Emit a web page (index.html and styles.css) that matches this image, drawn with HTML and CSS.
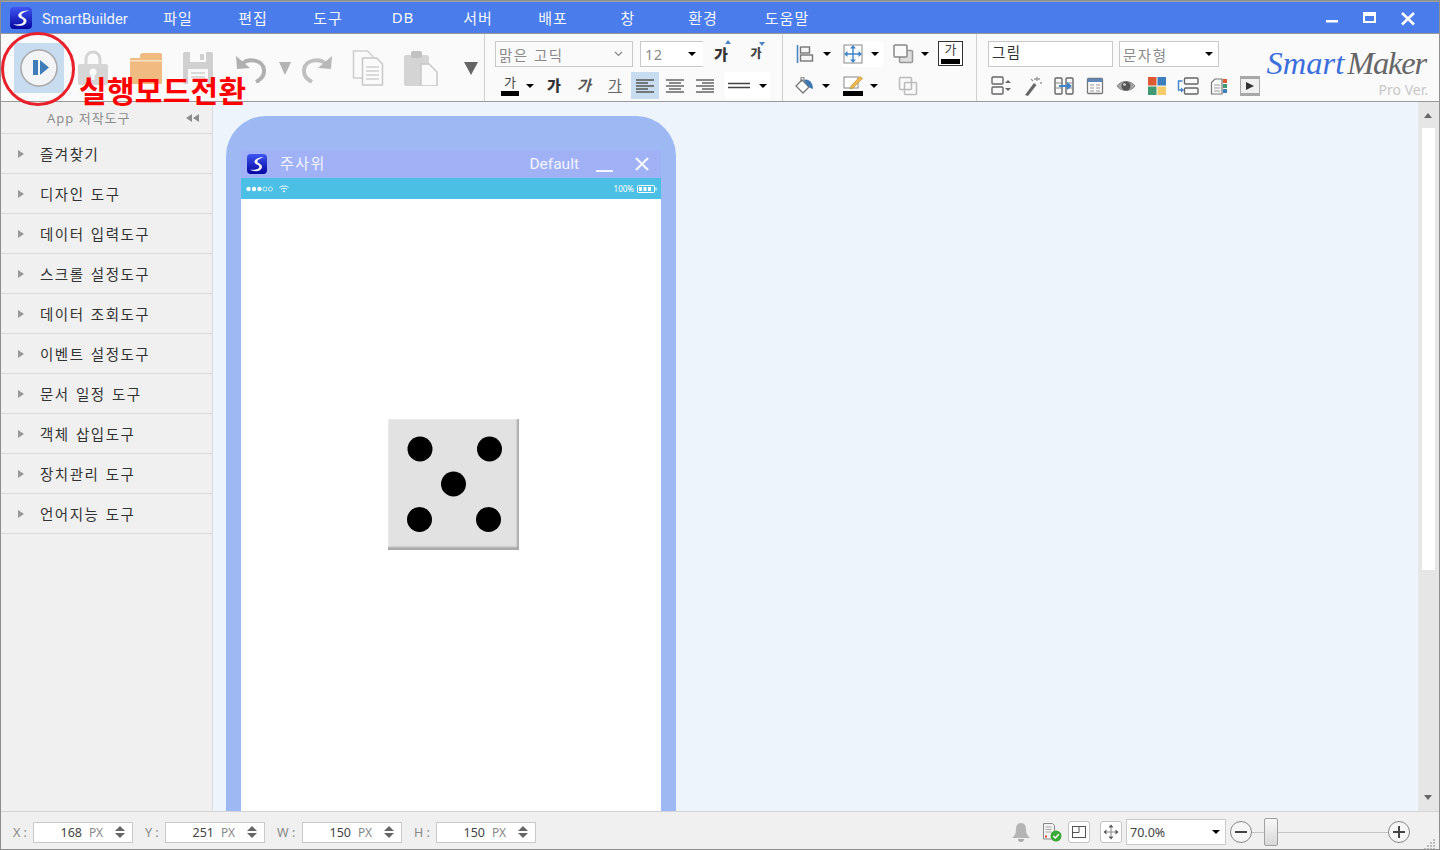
FILE: index.html
```html
<!DOCTYPE html>
<html lang="ko">
<head>
  <meta charset="UTF-8">
  <title>SmartBuilder</title>
  <link rel="stylesheet" href="styles.css">
</head>
<body>
  <svg class="defs" width="0" height="0">
    <defs>
      <linearGradient id="app-blue" x1="0" y1="0" x2="0" y2="1">
        <stop offset="0" stop-color="#3f55f2"/>
        <stop offset="1" stop-color="#0505a0"/>
      </linearGradient>
      <symbol id="app-logo" viewBox="0 0 22 22">
        <rect width="22" height="22" rx="4" fill="url(#app-blue)"/>
        <path d="M19 3.500C13 3 7 6 8.500 9.500C10 12 14 11.500 13.500 14.500C13 17 7.500 18 3 17C8 20 15.500 19.500 16.500 14.500C17 11 12 10.500 11.500 8.500C11 6.500 15 4.500 19 3.500Z" fill="#f4f6ff"/>
      </symbol>
    </defs>
  </svg>

  <div class="app">
    <!-- 타이틀바 -->
    <header class="titlebar">
      <div class="brand">
        <svg class="brand-icon"><use href="#app-logo"/></svg>
        <span>SmartBuilder</span>
      </div>
      <nav class="menu">
        <a>파일</a><a>편집</a><a>도구</a><a>DB</a><a>서버</a><a>배포</a><a>창</a><a>환경</a><a class="menu-last">도움말</a>
      </nav>
      <div class="win-btns">
        <svg width="38" height="24" viewBox="0 0 38 24"><rect x="13" y="14" width="12" height="2.500" fill="#fff"/></svg>
        <svg width="38" height="24" viewBox="0 0 38 24"><rect x="13" y="7" width="11" height="9" fill="none" stroke="#fff" stroke-width="2"/><rect x="13" y="7" width="11" height="3" fill="#fff"/></svg>
        <svg width="38" height="24" viewBox="0 0 38 24"><path d="M13 7L25 18.500M25 7L13 18.500" stroke="#fff" stroke-width="2.600"/></svg>
      </div>
    </header>

    <!-- 툴바 -->
    <section class="toolbar">
      <div class="group group-main">
        <button class="cell"><span class="run-btn">
          <svg width="50" height="50" viewBox="0 0 50 50"><circle cx="25" cy="25" r="18" fill="#f2f4f6" stroke="#a9a9a9" stroke-width="1.500"/><rect x="19" y="17" width="5" height="15" fill="#3f7db8"/><path d="M26 17L35 24.500L26 32Z" fill="#3f7db8"/></svg>
        </span></button>
        <button class="cell"><svg width="30" height="36" viewBox="0 0 30 36"><path d="M8 16V9a7 7 0 0 1 14 0v7" fill="none" stroke="#d4d4d4" stroke-width="3"/><rect x="0" y="14" width="30" height="21" rx="2" fill="#d6d6d6"/><circle cx="15" cy="22" r="3.500" fill="#fafafa"/><rect x="13.500" y="23" width="3" height="7" fill="#fafafa"/></svg></button>
        <button class="cell"><svg width="34" height="32" viewBox="0 0 34 32"><path d="M11 4a3 3 0 0 1 3-3h17a2 2 0 0 1 2 2v5H11Z" fill="#efbb80"/><rect x="1" y="6" width="32" height="26" rx="1" fill="#efbb80"/><rect x="1" y="8" width="32" height="1.500" fill="#f9e2c6"/></svg></button>
        <button class="cell"><svg width="30" height="32" viewBox="0 0 30 32"><path d="M0 2a2 2 0 0 1 2-2h26a2 2 0 0 1 2 2v28a2 2 0 0 1-2 2H2a2 2 0 0 1-2-2Z" fill="#d0d0d0"/><rect x="7" y="0" width="16" height="10" fill="#fafafa"/><rect x="17" y="2" width="4" height="6" fill="#d0d0d0"/><rect x="5" y="17" width="20" height="15" fill="#fafafa"/><path d="M8 21h14M8 25h14" stroke="#d0d0d0" stroke-width="1.500"/></svg></button>
        <button class="cell"><svg width="32" height="30" viewBox="0 0 32 30"><path d="M7 11C13 5 28 6 29 17C29.500 23 25 27 21 29" fill="none" stroke="#b0b0b0" stroke-width="4"/><path d="M1 3L2 16L15 15Z" fill="#b0b0b0"/></svg></button>
        <button class="cell"><i class="tri-lg"></i></button>
        <button class="cell"><svg width="32" height="30" viewBox="0 0 32 30"><g transform="translate(32 0) scale(-1 1)"><path d="M7 11C13 5 28 6 29 17C29.500 23 25 27 21 29" fill="none" stroke="#c0c0c0" stroke-width="4"/><path d="M1 3L2 16L15 15Z" fill="#b8b8b8"/></g></svg></button>
        <button class="cell"><svg width="32" height="36" viewBox="0 0 32 36"><path d="M1.500 1h14l5 5v22h-19Z" fill="#fafafa" stroke="#cfcfcf" stroke-width="1.500"/><path d="M10.500 8h14l6 6v21h-20Z" fill="#fafafa" stroke="#c8c8c8" stroke-width="1.500"/><path d="M14 17h13M14 21h13M14 25h13M14 29h13" stroke="#cfcfcf" stroke-width="1.500"/></svg></button>
        <button class="cell"><svg width="36" height="36" viewBox="0 0 36 36"><path d="M2 7a2 2 0 0 1 2-2h21a2 2 0 0 1 2 2v27a2 2 0 0 1-2 2H4a2 2 0 0 1-2-2Z" fill="#d4d4d4"/><rect x="9" y="1" width="11" height="7" rx="2" fill="#c2c2c2"/><path d="M19 14h8l8 8v14H19Z" fill="#fafafa" stroke="#c8c8c8" stroke-width="1.500"/></svg></button>
        <button class="cell cell-end"><i class="tri-lg tri-dark"></i></button>
      </div>

      <div class="group group-font">
        <div class="row row-font-a">
          <div class="select select-font"><span>맑은 고딕</span><svg width="9" height="6" viewBox="0 0 9 6"><path d="M1 1l3.500 3.500L8 1" fill="none" stroke="#888" stroke-width="1.200"/></svg></div>
          <div class="select select-size"><span>12</span><i class="caret"></i></div>
          <span class="cell"><b class="ga ga-bold grow">가</b></span>
          <span class="cell"><b class="ga ga-small shrink">가</b></span>
        </div>
        <div class="row row-font-b">
          <span class="cell"><span class="ga-color">가</span></span>
          <span class="cell"><i class="caret"></i></span>
          <span class="cell"><b class="ga ga-bold">가</b></span>
          <span class="cell"><em class="ga ga-italic">가</em></span>
          <span class="cell"><span class="ga ga-under">가</span></span>
          <span class="cell"><span class="align-btn active"><svg width="20" height="14" viewBox="0 0 20 14"><path d="M1 1h18M1 4h12M1 7h18M1 10h12M1 13h18" stroke="#555" stroke-width="1.500"/></svg></span></span>
          <span class="cell"><span class="align-btn"><svg width="20" height="14" viewBox="0 0 20 14"><path d="M1 1h18M4 4h12M1 7h18M4 10h12M1 13h18" stroke="#666" stroke-width="1.500"/></svg></span></span>
          <span class="cell"><span class="align-btn"><svg width="20" height="14" viewBox="0 0 20 14"><path d="M1 1h18M7 4h12M1 7h18M7 10h12M1 13h18" stroke="#666" stroke-width="1.500"/></svg></span></span>
          <span class="line-btn"><svg width="24" height="8" viewBox="0 0 24 8"><path d="M1 1.500h22M1 5.500h22" stroke="#444" stroke-width="1.600"/></svg><i class="caret"></i></span>
        </div>
      </div>

      <div class="group group-shape">
        <div class="row row-shape-a">
          <span class="cell"><svg width="18" height="20" viewBox="0 0 18 20"><path d="M1.500 1v18" stroke="#4a86c5" stroke-width="1.600"/><rect x="4.500" y="3" width="9" height="6" fill="#f6f6f6" stroke="#777" stroke-width="1.400"/><rect x="4.500" y="11" width="12" height="6" fill="#f6f6f6" stroke="#777" stroke-width="1.400"/></svg></span>
          <span class="cell"><i class="caret"></i></span>
          <span class="cell cell-end"><span class="white-btn"><svg width="20" height="20" viewBox="0 0 20 20"><rect x="1" y="1" width="18" height="18" fill="#fff" stroke="#888"/><path d="M3 10h14M10 3v14" stroke="#3f83c8" stroke-width="1.400"/><path d="M10 1l3 3.500H7ZM10 19l3-3.500H7ZM1 10l3.500-3v6ZM19 10l-3.500-3v6Z" fill="#3f83c8"/></svg><i class="caret"></i></span></span>
          <span class="cell cell-end"><svg width="22" height="20" viewBox="0 0 22 20"><rect x="6.500" y="6.500" width="13" height="12" rx="1" fill="#ddd" stroke="#999" stroke-width="1.500"/><rect x="1" y="1" width="13" height="12" rx="1" fill="#fafafa" stroke="#888" stroke-width="1.500"/></svg></span>
          <span class="cell"><i class="caret"></i></span>
          <span class="text-box"><span>가</span></span>
        </div>
        <div class="row row-shape-b">
          <span class="cell"><svg width="20" height="18" viewBox="0 0 20 18"><path d="M7 3L14 10L8 16L1 9Z" fill="#fff" stroke="#777" stroke-width="1.300"/><path d="M6 5V1.500a1.500 1.500 0 0 1 3 0V5" fill="none" stroke="#777" stroke-width="1.100"/><path d="M9 3C13 1 18 5 18 12C14 11 11 8 9 3Z" fill="#3f78b0"/></svg></span>
          <span class="cell"><i class="caret"></i></span>
          <span class="cell cell-end"><span class="pen-icon"><svg width="20" height="14" viewBox="0 0 20 14"><rect x="1" y="2" width="14" height="11" fill="#fff" stroke="#888"/><path d="M8 11L17 1.500L19.500 3.500L10 13L7 14Z" fill="#f0b94a" stroke="#b47f28" stroke-width=".6"/></svg><i class="color-bar"></i></span></span>
          <span class="cell"><i class="caret"></i></span>
          <span class="cell cell-end"><svg width="20" height="20" viewBox="0 0 20 20"><rect x="6.500" y="6.500" width="12" height="12" rx="1" fill="none" stroke="#bbb" stroke-width="1.500"/><rect x="1.500" y="1.500" width="12" height="12" rx="1" fill="none" stroke="#bbb" stroke-width="1.500"/></svg></span>
        </div>
      </div>

      <div class="group group-object">
        <div class="object-tools">
          <div class="row row-object-a">
            <div class="name-input">그림</div>
            <div class="select select-type"><span>문자형</span><i class="caret"></i></div>
          </div>
          <div class="row row-object-b">
            <span class="cell"><svg width="22" height="20" viewBox="0 0 22 20"><rect x="1" y="1" width="11" height="7" rx="1" fill="none" stroke="#666" stroke-width="1.400"/><rect x="1" y="11" width="11" height="7" rx="1" fill="none" stroke="#666" stroke-width="1.400"/><path d="M17 4l3 3h-6ZM17 15l3-3h-6Z" fill="#666"/></svg></span>
            <span class="cell"><svg width="18" height="20" viewBox="0 0 18 20"><path d="M1 19L10 7L12.500 9L4 20Z" fill="#666"/><path d="M13 1v4M10 3h6M16 7h2M7 3l2 2" stroke="#999" stroke-width="1.300"/></svg></span>
            <span class="cell"><svg width="20" height="18" viewBox="0 0 20 18"><rect x="1" y="1" width="7" height="16" rx="1" fill="none" stroke="#666" stroke-width="1.400"/><rect x="12" y="1" width="7" height="16" rx="1" fill="none" stroke="#666" stroke-width="1.400"/><path d="M1 6h7M1 11h7M12 6h7M12 11h7" stroke="#888"/><path d="M5 8h8V5l5 4-5 4v-3H5Z" fill="#3f83c8"/></svg></span>
            <span class="cell"><svg width="18" height="18" viewBox="0 0 18 18"><rect x="1.500" y="1.500" width="15" height="15" rx="1" fill="#fafafa" stroke="#777" stroke-width="1.300"/><rect x="1.500" y="1.500" width="15" height="3.500" fill="#5d85b5"/><path d="M4 8h4M10 8h4M4 11h4M10 11h4M4 14h4M10 14h4" stroke="#999"/></svg></span>
            <span class="cell"><svg width="20" height="14" viewBox="0 0 20 14"><path d="M1 7C5 1 15 1 19 7C15 13 5 13 1 7Z" fill="#a5a5a5" stroke="#8a8a8a"/><circle cx="10" cy="7" r="4.500" fill="#555"/><circle cx="8.500" cy="5.500" r="1.300" fill="#ddd"/></svg></span>
            <span class="cell"><svg width="18" height="18" viewBox="0 0 18 18"><rect width="8.500" height="8.500" fill="#dd5a30"/><rect x="9.500" width="8.500" height="8.500" fill="#3d7fbd"/><rect y="9.500" width="8.500" height="8.500" fill="#3f9a74"/><rect x="9.500" y="9.500" width="8.500" height="8.500" fill="#f8cb6a"/></svg></span>
            <span class="cell"><svg width="22" height="18" viewBox="0 0 22 18"><rect x="7.500" y="1" width="13.500" height="6" rx="1" fill="none" stroke="#666" stroke-width="1.400"/><rect x="7.500" y="11" width="13.500" height="6" rx="1" fill="none" stroke="#666" stroke-width="1.400"/><path d="M5.500 4H1.500v9h3" fill="none" stroke="#3f83c8" stroke-width="1.400"/><path d="M4 10.500l3 2.500-3 2.500Z" fill="#3f83c8"/></svg></span>
            <span class="cell"><svg width="18" height="18" viewBox="0 0 18 18"><path d="M1.500 5.500L5 2h7v15H1.500Z" fill="#fafafa" stroke="#777" stroke-width="1.200"/><path d="M4 8h6M4 11h6M4 14h6" stroke="#999"/><rect x="13" y="2" width="4" height="4" fill="#dd5a30"/><rect x="13" y="7" width="4" height="4" fill="#3f9a74"/><rect x="13" y="12" width="4" height="4" fill="#3d7fbd"/></svg></span>
            <span class="cell"><svg width="20" height="20" viewBox="0 0 20 20"><rect width="20" height="20" fill="#a8a8a8"/><rect x="1" y="3" width="18" height="14" fill="#f0f0f0"/><path d="M6 6l8 4-8 4Z" fill="#333"/></svg></span>
          </div>
        </div>
        <div class="logo">
          <div class="logo-name"><span class="logo-smart">Smart</span><span class="logo-maker">Maker</span></div>
          <div class="logo-ver">Pro Ver.</div>
        </div>
      </div>
    </section>

    <!-- 본문 -->
    <main class="workspace">
      <aside class="sidebar">
        <div class="side-head"><span>App 저작도구</span><i class="collapse"></i></div>
        <ul class="side-list">
          <li>즐겨찾기</li>
          <li>디자인 도구</li>
          <li>데이터 입력도구</li>
          <li>스크롤 설정도구</li>
          <li>데이터 조회도구</li>
          <li>이벤트 설정도구</li>
          <li>문서 일정 도구</li>
          <li>객체 삽입도구</li>
          <li>장치관리 도구</li>
          <li>언어지능 도구</li>
        </ul>
      </aside>

      <div class="canvas">
        <div class="phone">
          <div class="phone-title">
            <svg class="phone-logo"><use href="#app-logo"/></svg>
            <span class="phone-name">주사위</span>
            <span class="phone-theme">Default</span>
            <i class="phone-min"></i>
            <svg class="phone-close" width="14" height="14" viewBox="0 0 14 14"><path d="M1 1L13 13M13 1L1 13" stroke="#f2f4ff" stroke-width="2.400"/></svg>
          </div>
          <div class="phone-status">
            <svg width="28" height="6" viewBox="0 0 28 6"><g fill="#fff"><circle cx="2.500" cy="3" r="2.200"/><circle cx="8" cy="3" r="2.200"/><circle cx="13.500" cy="3" r="2.200"/></g><g fill="none" stroke="#fff" stroke-width=".7"><circle cx="19" cy="3" r="2"/><circle cx="24.500" cy="3" r="2"/></g></svg>
            <svg class="wifi" width="10" height="8" viewBox="0 0 10 8"><path d="M.5 2.500C3 .5 7 .5 9.500 2.500M2 4.300C3.800 3 6.200 3 8 4.300" fill="none" stroke="#fff" stroke-width="1"/><path d="M3.500 6C4.500 5.300 5.500 5.300 6.500 6L5 7.600Z" fill="#fff"/></svg>
            <span class="batt-text">100%</span>
            <svg width="20" height="8" viewBox="0 0 20 8"><rect x=".5" y=".5" width="17" height="7" rx="1" fill="none" stroke="#fff"/><path d="M2 2h3v4H2ZM6.500 2h3v4h-3ZM11 2h3v4h-3Z" fill="#fff"/><rect x="18.500" y="2.500" width="1" height="3" fill="#fff"/></svg>
          </div>
          <div class="screen">
            <div class="dice">
              <svg width="131" height="131" viewBox="0 0 131 131"><g fill="#000"><circle cx="32" cy="30" r="12.500"/><circle cx="101.500" cy="30" r="12.500"/><circle cx="65.500" cy="65" r="12.500"/><circle cx="31.500" cy="100.500" r="12.500"/><circle cx="100.500" cy="100.500" r="12.500"/></g></svg>
            </div>
          </div>
        </div>
      </div>

      <div class="scrollbar">
        <div class="scroll-btn"><i class="arrow-up"></i></div>
        <div class="scroll-thumb"></div>
        <div class="scroll-btn scroll-btn-end"><i class="arrow-down"></i></div>
      </div>
    </main>

    <!-- 상태바 -->
    <footer class="statusbar">
      <div class="coords">
        <div class="coord"><label>X :</label><div class="spin"><span class="spin-val">168</span><span class="spin-unit">PX</span><i class="spin-arrows"></i></div></div>
        <div class="coord"><label>Y :</label><div class="spin"><span class="spin-val">251</span><span class="spin-unit">PX</span><i class="spin-arrows"></i></div></div>
        <div class="coord"><label class="label-w">W :</label><div class="spin"><span class="spin-val">150</span><span class="spin-unit">PX</span><i class="spin-arrows"></i></div></div>
        <div class="coord"><label class="label-h">H :</label><div class="spin"><span class="spin-val">150</span><span class="spin-unit">PX</span><i class="spin-arrows"></i></div></div>
      </div>
      <div class="status-right">
        <svg width="20" height="20" viewBox="0 0 20 20"><path d="M10 1C6 1 5 4 5 8C5 12 3 14 1 16H19C17 14 15 12 15 8C15 4 14 1 10 1Z" fill="#b4b4b4"/><path d="M7 17a3 3 0 0 0 6 0Z" fill="#a8a8a8"/></svg>
        <svg class="st-doc" width="19" height="19" viewBox="0 0 19 19"><path d="M.5.500h9l2 2V16H.5Z" fill="#f2f2f2" stroke="#8a8a8a"/><path d="M2.500 4h6M2.500 6.500h6M2.500 9h6" stroke="#aaa"/><rect x="2" y="12.500" width="2" height="2" fill="#e0452d"/><circle cx="13" cy="13" r="5.500" fill="#3aa935"/><path d="M10.300 13l2 2 3.500-3.800" fill="none" stroke="#fff" stroke-width="1.500"/></svg>
        <span class="st-btn st-btn-a"><svg width="14" height="14" viewBox="0 0 14 14"><rect x=".5" y="1.500" width="13" height="11" fill="none" stroke="#555"/><path d="M.5 7.500h6.500V1.500" fill="none" stroke="#555"/></svg></span>
        <span class="st-btn st-btn-b"><svg width="16" height="16" viewBox="0 0 16 16"><path d="M8 .5L10.500 3.500H5.500ZM8 15.500L10.500 12.500H5.500ZM.5 8L3.500 5.500V10.500ZM15.500 8L12.500 5.500V10.500Z" fill="#555"/><path d="M8 3v10M3 8h10" stroke="#888"/></svg></span>
        <div class="select select-zoom"><span>70.0%</span><i class="caret"></i></div>
        <span class="zoom-btn"><i class="zoom-minus"></i></span>
        <div class="zoom-track"><i class="zoom-thumb"></i></div>
        <span class="zoom-btn"><i class="zoom-minus"></i><i class="zoom-plus"></i></span>
        <svg class="grip" width="12" height="12" viewBox="0 0 12 12"><g fill="#bdbdbd"><rect x="9" y="1" width="2" height="2"/><rect x="6" y="4" width="2" height="2"/><rect x="9" y="4" width="2" height="2"/><rect x="3" y="7" width="2" height="2"/><rect x="6" y="7" width="2" height="2"/><rect x="9" y="7" width="2" height="2"/><rect x="0" y="10" width="2" height="2"/><rect x="3" y="10" width="2" height="2"/><rect x="6" y="10" width="2" height="2"/><rect x="9" y="10" width="2" height="2"/></g></svg>
      </div>
    </footer>

    <!-- 설명 표시 -->
    <svg class="mark-circle" width="76" height="76" viewBox="0 0 76 76"><circle cx="38" cy="38" r="35.500" fill="none" stroke="#e8202a" stroke-width="3"/></svg>
    <div class="mark-text">실행모드전환</div>
  </div>
</body>
</html>
```

FILE: styles.css
```css
* { box-sizing: border-box; }

body {
  margin: 0;
  font-family: "Noto Sans", "Noto Sans CJK KR", sans-serif;
  font-size: 13px;
  color: #333;
  background: #f0f0f0;
}

button { border: 0; padding: 0; background: none; font: inherit; }
i { display: block; }

.defs { position: absolute; }

.app {
  position: relative;
  display: flex;
  flex-direction: column;
  width: 1440px;
  height: 850px;
  border: 1px solid #8f8f8f;
  overflow: hidden;
  background: #f0f0f0;
}

/* titlebar */
.titlebar {
  display: flex;
  align-items: center;
  flex: none;
  height: 32px;
  border-top: 1px solid #a0a0a0;
  background: #4a7deb;
  color: #fff;
}

.brand {
  display: flex;
  align-items: center;
  flex: none;
  width: 139.500px;
  padding-left: 9px;
  font-family: Roboto, "Noto Sans", sans-serif;
  font-size: 14.800px;
  color: #eef3ff;
}

.brand span { padding-top: 3px; }

.brand-icon { width: 22px; height: 22px; margin-right: 10px; }

.menu { display: flex; flex: 1; }

.menu a {
  width: 75px;
  text-align: center;
  font-size: 15px;
  letter-spacing: 1px;
  color: #f4f7ff;
}

.menu .menu-last { width: 93px; }

.win-btns { display: flex; padding-right: 12px; }

/* toolbar */
.toolbar {
  display: flex;
  flex: none;
  height: 69px;
  border-top: 1px solid #9a9a9a;
  border-bottom: 1px solid #9a9a9a;
  background: #fafafa;
}

.group {
  flex: none;
  border-right: 1px solid #cfcfcf;
}

.cell {
  display: flex;
  align-items: center;
  justify-content: center;
}

.cell-end { justify-content: flex-end; }

.group-main {
  display: grid;
  grid-template-columns: 54px 54px 52px 52px 54px 14px 50px 52px 52px 38px;
  width: 484px;
  padding-left: 11px;
}

.group-main .cell-end { padding-right: 6px; }

.run-btn {
  display: block;
  width: 50px;
  height: 50px;
  background: #c8dcf0;
}

.run-btn svg { display: block; }

.tri-lg {
  margin-top: 2px;
  border-left: 6px solid transparent;
  border-right: 6px solid transparent;
  border-top: 13px solid #b4b4b4;
}

.tri-lg.tri-dark {
  border-left-width: 7px;
  border-right-width: 7px;
  border-top-color: #666;
}

.group-font { width: 298px; padding-top: 7px; }
.group-shape { width: 194px; padding-top: 7px; }

.row { display: grid; height: 26px; }

.row + .row { height: 27px; margin-top: 5px; }

.row-font-a {
  grid-template-columns: 138px 70px 36px 34px;
  padding-left: 10px;
}

.row-font-b {
  grid-template-columns: 20px 20px 28px 32px 30px 30px 30px 30px 45px;
  padding-left: 15px;
}

.row-shape-a {
  grid-template-columns: 20px 24px 44px 32px 20px 25px;
  padding-left: 12px;
}

.row-shape-b {
  grid-template-columns: 20px 22px 26px 22px 33px;
  padding-left: 12px;
}

.select {
  display: flex;
  align-items: center;
  justify-content: space-between;
  border: 1.500px solid #c9c9c9;
  color: #8a8a8a;
  font-size: 14.500px;
  letter-spacing: 1.500px;
}

.select-font { padding: 0 9px 0 3px; }

.select-size {
  margin-left: 7px;
  padding: 0 7px 0 4px;
  border-right: 0;
  background: #fff;
  letter-spacing: .5px;
}

.caret {
  flex: none;
  width: 0;
  height: 0;
  border-left: 4px solid transparent;
  border-right: 4px solid transparent;
  border-top: 4px solid #000;
}

.ga {
  position: relative;
  font-size: 15px;
  line-height: 1;
  color: #444;
}

.ga-bold { font-weight: 900; color: #333; }
.ga-small { font-size: 12px; font-weight: 900; }
.ga-italic { font-weight: 700; font-style: italic; color: #555; }
.ga-under { color: #666; text-decoration: underline; }

.grow::after,
.shrink::after {
  content: "";
  position: absolute;
  right: -3px;
  top: -7px;
  border-left: 3.500px solid transparent;
  border-right: 3.500px solid transparent;
}

.grow::after { border-bottom: 4px solid #4a86c5; }
.shrink::after { top: -6px; border-top: 4px solid #4a86c5; }

.ga-color {
  display: block;
  width: 18px;
  height: 21px;
  border-bottom: 5px solid #000;
  text-align: center;
  font-size: 13px;
  line-height: 15px;
  color: #444;
}

.align-btn {
  display: flex;
  align-items: center;
  justify-content: center;
  width: 28px;
  height: 27px;
}

.align-btn.active { background: #c8dcf0; }

.line-btn {
  display: flex;
  align-items: center;
  width: 45px;
  margin-left: 5px;
  padding-left: 2px;
  background: #fff;
}

.line-btn .caret { margin-left: 8px; }

.white-btn {
  display: flex;
  align-items: center;
  width: 40px;
  height: 26px;
  background: #fff;
}

.white-btn .caret { margin-left: 8px; }

.text-box {
  display: block;
  width: 25px;
  height: 25px;
  margin-left: 3px;
  border: 1.500px solid #333;
  background: #fff;
  text-align: center;
  font-size: 13px;
  line-height: 15px;
  color: #444;
}

.text-box span {
  display: block;
  height: 22px;
  margin: 0 2px;
  border-bottom: 5px solid #000;
}

.pen-icon { display: block; width: 20px; }
.pen-icon svg { display: block; }
.color-bar { height: 5px; margin-top: 2px; background: #000; }

.group-object {
  display: flex;
  justify-content: space-between;
  flex: 1;
  min-width: 0;
  border-right: 0;
  padding: 7px 13px 0 11px;
}

.object-tools { flex: none; }

.row-object-a { grid-template-columns: 125px 100px; column-gap: 6px; }
.row-object-b { grid-template-columns: repeat(9, 31px); margin-left: -2px; }

.name-input {
  padding-left: 3px;
  border: 1.500px solid #c9c9c9;
  background: #fff;
  font-size: 14.500px;
  letter-spacing: 1.500px;
  line-height: 21px;
  color: #333;
}

.select-type { padding: 0 5px 0 3px; background: #fff; }

.logo { flex: none; text-align: right; }

.logo-name {
  display: flex;
  gap: 3px;
  margin-top: 3px;
  font-family: "Liberation Serif", serif;
  font-size: 32.500px;
  font-style: italic;
  line-height: 38px;
  white-space: nowrap;
}

.logo-smart { color: #3a6fdc; }
.logo-maker { color: #666; letter-spacing: -1.200px; }

.logo-ver {
  margin-right: -2px;
  font-size: 14px;
  line-height: 16px;
  color: #c8c8c8;
}

/* workspace */
.workspace {
  display: flex;
  flex: 1;
  min-height: 0;
}

.sidebar {
  flex: none;
  width: 212px;
  border-right: 1px solid #dadada;
  background: #f0f0f0;
}

.side-head {
  display: flex;
  align-items: center;
  justify-content: space-between;
  height: 32px;
  padding: 0 12px 0 46px;
  border-bottom: 1px solid #dadada;
  font-size: 13px;
  letter-spacing: 1px;
  color: #8d8d8d;
}

.collapse {
  position: relative;
  width: 14px;
  height: 8px;
}

.collapse::before,
.collapse::after {
  content: "";
  position: absolute;
  top: 0;
  border-top: 4px solid transparent;
  border-bottom: 4px solid transparent;
  border-right: 6px solid #8d8d8d;
}

.collapse::before { left: 0; }
.collapse::after { left: 7px; }

.side-list {
  margin: 0;
  padding: 0;
  list-style: none;
}

.side-list li {
  display: flex;
  align-items: center;
  height: 40px;
  padding-left: 17px;
  border-bottom: 1px solid #dadada;
  font-size: 14.500px;
  letter-spacing: 1.500px;
  word-spacing: 1px;
  color: #333;
}

.side-list li::before {
  content: "";
  margin-right: 16px;
  border-top: 4.500px solid transparent;
  border-bottom: 4.500px solid transparent;
  border-left: 6px solid #999;
}

.canvas {
  flex: 1;
  min-width: 0;
  padding: 14px 0 0 13px;
  overflow: hidden;
  background: #edf4fc;
}

.phone {
  display: flex;
  flex-direction: column;
  width: 450px;
  height: 760px;
  padding: 34px 15px 0;
  border-radius: 40px 40px 0 0;
  background: #9db8f2;
}

.phone-title {
  display: flex;
  align-items: center;
  flex: none;
  height: 28px;
  padding-left: 6px;
  background: #a0b2f5;
  color: #f2f4ff;
}

.phone-logo { width: 20px; height: 20px; margin-right: 13px; }

.phone-name {
  margin-top: -3px;
  font-size: 15px;
  letter-spacing: 1.500px;
}

.phone-theme {
  margin-left: auto;
  font-family: Roboto, "Noto Sans", sans-serif;
  font-size: 15.500px;
}

.phone-min {
  width: 17px;
  height: 2px;
  margin: 13px 0 0 17px;
  background: #f2f4ff;
}

.phone-close { margin: 0 12px 0 22px; }

.phone-status {
  display: flex;
  align-items: center;
  flex: none;
  height: 21px;
  padding: 0 4px 0 5px;
  background: #4bbfe4;
  color: #fff;
}

.wifi { margin-left: 5px; }

.batt-text {
  margin: 0 3px 0 auto;
  font-size: 8px;
}

.screen {
  position: relative;
  flex: 1;
  background: #fff;
}

/* a placed object on the design canvas */
.dice {
  position: absolute;
  left: 147px;
  top: 220px;
  width: 131px;
  height: 131px;
  background: #e2e2e2;
  box-shadow: inset -2px -3px 2px #a8a8a8, inset 1px 1px 1px #ececec;
}

.dice svg { display: block; }

.scrollbar {
  display: flex;
  flex-direction: column;
  flex: none;
  width: 21px;
  background: #e6e6e6;
}

.scroll-btn {
  display: flex;
  align-items: center;
  justify-content: center;
  flex: none;
  height: 26px;
  padding-right: 1px;
}

.scroll-btn-end { margin-top: auto; }

.arrow-up {
  border-left: 4px solid transparent;
  border-right: 4px solid transparent;
  border-bottom: 5px solid #666;
}

.arrow-down {
  margin-top: -2px;
  border-left: 4px solid transparent;
  border-right: 4px solid transparent;
  border-top: 5px solid #666;
}

.scroll-thumb {
  width: 13px;
  height: 442px;
  margin-left: 4px;
  background: #fff;
}

/* statusbar */
.statusbar {
  display: flex;
  align-items: center;
  justify-content: space-between;
  flex: none;
  height: 38px;
  padding-top: 3px;
  border-top: 1px solid #d4d4d4;
  background: #f0f0f0;
}

.coords {
  display: flex;
  gap: 12px;
  padding-left: 12px;
}

.coord { display: flex; align-items: center; }

.coord label {
  width: 20px;
  font-size: 12.500px;
  color: #888;
}

.coord .label-w { width: 25px; }
.coord .label-h { width: 22px; }

.spin {
  display: flex;
  align-items: center;
  width: 100px;
  height: 21px;
  border: 1px solid #c9c9c9;
  background: #fff;
  font-size: 12.500px;
}

.spin-val { width: 48px; text-align: right; color: #444; }
.spin-unit { width: 33px; padding-left: 7px; font-size: 12px; color: #888; }

.spin-arrows {
  position: relative;
  width: 10px;
  height: 12px;
}

.spin-arrows::before,
.spin-arrows::after {
  content: "";
  position: absolute;
  left: 0;
  border-left: 5px solid transparent;
  border-right: 5px solid transparent;
}

.spin-arrows::before { top: 0; border-bottom: 5px solid #666; }
.spin-arrows::after { bottom: 0; border-top: 5px solid #666; }

.status-right {
  display: flex;
  align-items: center;
  padding-right: 3px;
}

.st-doc { margin-left: 12px; }

.st-btn {
  display: flex;
  align-items: center;
  justify-content: center;
  width: 22px;
  height: 22px;
  border: 1px solid #c4c4c4;
  border-radius: 3px;
  background: #fff;
}

.st-btn-a { margin-left: 6px; }
.st-btn-b { margin-left: 10px; }

.select-zoom {
  width: 100px;
  height: 26px;
  margin-left: 4px;
  padding: 0 5px 0 3px;
  border-width: 1px;
  background: #fff;
  font-size: 12.500px;
  letter-spacing: 0;
  color: #444;
}

.zoom-btn {
  position: relative;
  flex: none;
  width: 22px;
  height: 22px;
  margin-left: 4px;
  border: 1.200px solid #888;
  border-radius: 50%;
  background: #f6f6f6;
}

.zoom-btn + .zoom-track + .zoom-btn { margin-left: 0; }

.zoom-minus {
  position: absolute;
  left: 4px;
  right: 4px;
  top: 9px;
  height: 2px;
  background: #444;
}

.zoom-plus {
  position: absolute;
  top: 4px;
  bottom: 4px;
  left: 9px;
  width: 2px;
  background: #444;
}

.zoom-track {
  display: flex;
  align-items: center;
  width: 136px;
  height: 28px;
  background: linear-gradient(#c4c4c4, #c4c4c4) center / 100% 1px no-repeat;
}

.zoom-thumb {
  width: 14px;
  height: 28px;
  margin-left: 12px;
  border: 1px solid #a0a0a0;
  border-radius: 2px;
  background: linear-gradient(#f8f8f8, #d8d8d8);
}

.grip { margin: 12px 0 -12px 14px; }

/* annotation over the toolbar */
.mark-circle {
  position: absolute;
  left: -1px;
  top: 30px;
}

.mark-text {
  position: absolute;
  left: 78px;
  top: 68px;
  font-family: "Noto Sans CJK KR", sans-serif;
  font-size: 30px;
  font-weight: 700;
  line-height: 40px;
  letter-spacing: .3px;
  color: #f00;
  white-space: nowrap;
}
```
